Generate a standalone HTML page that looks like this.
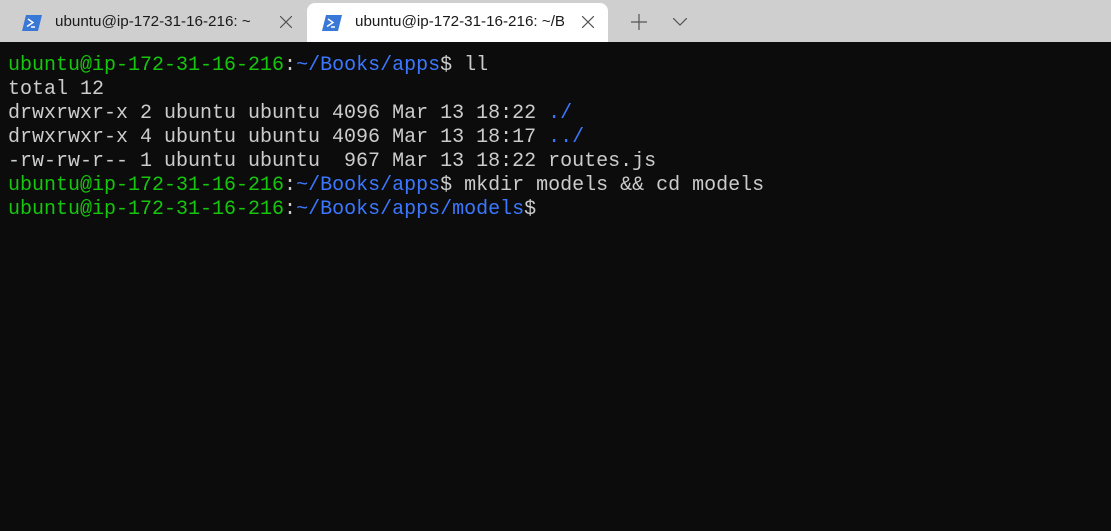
<!DOCTYPE html><html><head><style>
body{margin:0;width:1111px;height:531px;background:#0c0c0c;overflow:hidden;font-family:"Liberation Sans",sans-serif}
.bar{position:absolute;left:0;top:0;width:1111px;height:42px;background:#cfcfcf}
.tab{position:absolute;top:3px;height:39px;font-size:15.2px;color:#1a1a1a}
.act{background:#fff;border-radius:8px 8px 0 0}
.t{position:absolute;top:10px}
.ic{position:absolute;top:12px}
.x{position:absolute;top:13px}
pre{position:absolute;left:8px;top:54px;margin:0;font:20px/24px "Liberation Mono",monospace;color:#cccccc}
.g{color:#16c60c}.b{color:#3b78ff}
</style></head><body>
<div class="bar"></div>
<div class="tab" style="left:0;width:306px">
<svg class="ic" style="left:22px" width="20" height="16" viewBox="0 0 20 16"><path d="M4 0H20L16 16H0Z" fill="#3a78d8"/><path d="M6 4l5 3.5-6 4M9 12h4" stroke="#fff" stroke-width="1.4" fill="none"/></svg>
<span class="t" style="left:55px">ubuntu@ip-172-31-16-216: ~</span>
<svg class="x" style="left:280px" width="12" height="12"><path d="M0 0L12 12M12 0L0 12" stroke="#555" stroke-width="1.2"/></svg>
</div>
<div class="tab act" style="left:307px;width:301px">
<svg class="ic" style="left:15px" width="20" height="16" viewBox="0 0 20 16"><path d="M4 0H20L16 16H0Z" fill="#3a78d8"/><path d="M6 4l5 3.5-6 4M9 12h4" stroke="#fff" stroke-width="1.4" fill="none"/></svg>
<span class="t" style="left:48px;width:209px;overflow:hidden;white-space:nowrap">ubuntu@ip-172-31-16-216: ~/Books/apps</span>
<svg class="x" style="left:275px" width="12" height="12"><path d="M0 0L12 12M12 0L0 12" stroke="#555" stroke-width="1.2"/></svg>
</div>
<svg style="position:absolute;left:631px;top:14px" width="16" height="16"><path d="M8 0V16M0 8H16" stroke="#555" stroke-width="1.2"/></svg>
<svg style="position:absolute;left:673px;top:18px" width="14" height="8"><path d="M0 0L7 7L14 0" stroke="#555" stroke-width="1.2" fill="none"/></svg>
<pre><span class="g">ubuntu@ip-172-31-16-216</span>:<span class="b">~/Books/apps</span>$ ll
total 12
drwxrwxr-x 2 ubuntu ubuntu 4096 Mar 13 18:22 <span class="b">./</span>
drwxrwxr-x 4 ubuntu ubuntu 4096 Mar 13 18:17 <span class="b">../</span>
-rw-rw-r-- 1 ubuntu ubuntu  967 Mar 13 18:22 routes.js
<span class="g">ubuntu@ip-172-31-16-216</span>:<span class="b">~/Books/apps</span>$ mkdir models &amp;&amp; cd models
<span class="g">ubuntu@ip-172-31-16-216</span>:<span class="b">~/Books/apps/models</span>$</pre>
</body></html>
